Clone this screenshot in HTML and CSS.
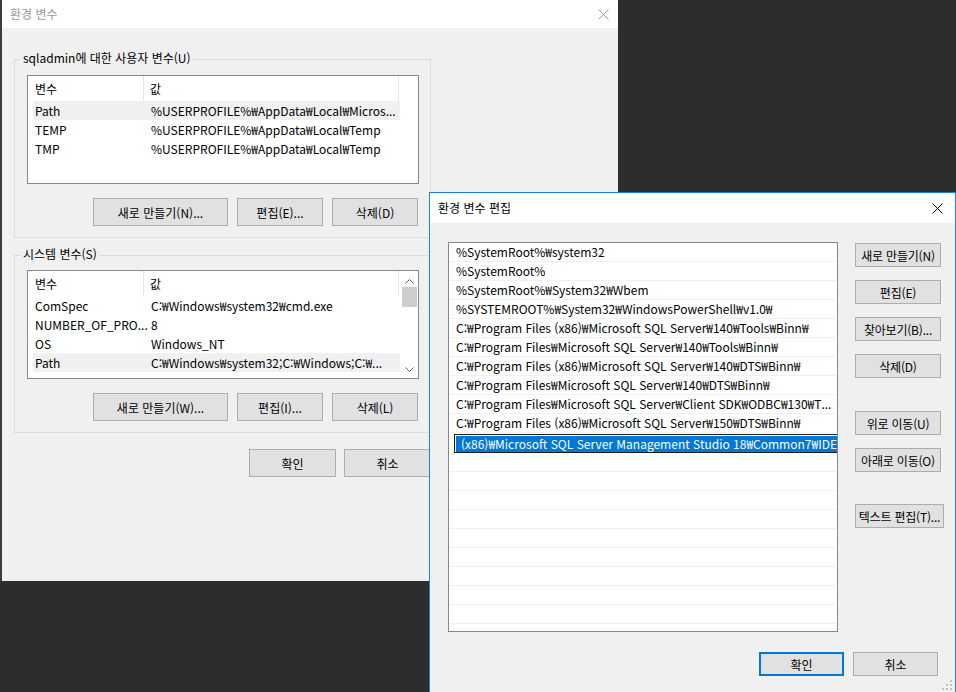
FILE: index.html
```html
<!DOCTYPE html>
<html lang="ko">
<head>
    <meta charset="UTF-8">
    <meta name="viewport" content="width=device-width, initial-scale=1.0">
    <title>환경 변수</title>
    <link rel="stylesheet" href="styles.css">
</head>
<body>
    <!-- back window: 환경 변수 -->
    <div class="window env-window">
        <div class="titlebar inactive">
            <span class="title">환경 변수</span>
            <svg class="close" width="11" height="11" viewBox="0 0 11 11">
                <path d="M0.5 0.5 L10.5 10.5 M10.5 0.5 L0.5 10.5" stroke="#9a9a9a" stroke-width="1" fill="none"/>
            </svg>
        </div>
        <div class="env-body">
            <div class="group user-group">
                <span class="group-label">sqladmin에 대한 사용자 변수(U)</span>
                <div class="listview">
                    <div class="lv-content">
                        <div class="lv-header">
                            <span class="hc1">변수</span>
                            <span class="hc2">값</span>
                        </div>
                        <div class="lv-row selected"><span class="c1">Path</span><span class="c2">%USERPROFILE%₩AppData₩Local₩Micros...</span></div>
                        <div class="lv-row"><span class="c1">TEMP</span><span class="c2">%USERPROFILE%₩AppData₩Local₩Temp</span></div>
                        <div class="lv-row"><span class="c1">TMP</span><span class="c2">%USERPROFILE%₩AppData₩Local₩Temp</span></div>
                    </div>
                </div>
                <div class="btn-row">
                    <button class="btn wide">새로 만들기(N)...</button>
                    <button class="btn">편집(E)...</button>
                    <button class="btn">삭제(D)</button>
                </div>
            </div>

            <div class="group system-group">
                <span class="group-label">시스템 변수(S)</span>
                <div class="listview">
                    <div class="lv-content">
                        <div class="lv-header">
                            <span class="hc1">변수</span>
                            <span class="hc2">값</span>
                        </div>
                        <div class="lv-row"><span class="c1">ComSpec</span><span class="c2">C:₩Windows₩system32₩cmd.exe</span></div>
                        <div class="lv-row"><span class="c1">NUMBER_OF_PRO...</span><span class="c2">8</span></div>
                        <div class="lv-row"><span class="c1">OS</span><span class="c2">Windows_NT</span></div>
                        <div class="lv-row selected"><span class="c1">Path</span><span class="c2">C:₩Windows₩system32;C:₩Windows;C:₩...</span></div>
                    </div>
                    <div class="scrollbar">
                        <svg class="arrow" width="9" height="5" viewBox="0 0 9 5"><path d="M0.5 4.5 L4.5 0.5 L8.5 4.5" stroke="#606060" fill="none"/></svg>
                        <div class="thumb"></div>
                        <div class="track"></div>
                        <svg class="arrow" width="9" height="5" viewBox="0 0 9 5"><path d="M0.5 0.5 L4.5 4.5 L8.5 0.5" stroke="#606060" fill="none"/></svg>
                    </div>
                </div>
                <div class="btn-row">
                    <button class="btn wide">새로 만들기(W)...</button>
                    <button class="btn">편집(I)...</button>
                    <button class="btn">삭제(L)</button>
                </div>
            </div>

            <div class="dialog-buttons">
                <button class="btn big">확인</button>
                <button class="btn big">취소</button>
            </div>
        </div>
    </div>

    <!-- front window: 환경 변수 편집 -->
    <div class="window edit-window">
        <div class="titlebar">
            <span class="title">환경 변수 편집</span>
            <svg class="close" width="11" height="11" viewBox="0 0 11 11">
                <path d="M0.5 0.5 L10.5 10.5 M10.5 0.5 L0.5 10.5" stroke="#000" stroke-width="1" fill="none"/>
            </svg>
        </div>
        <div class="edit-body">
            <div class="path-list">
                <div class="path-row">%SystemRoot%₩system32</div>
                <div class="path-row">%SystemRoot%</div>
                <div class="path-row">%SystemRoot%₩System32₩Wbem</div>
                <div class="path-row">%SYSTEMROOT%₩System32₩WindowsPowerShell₩v1.0₩</div>
                <div class="path-row">C:₩Program Files (x86)₩Microsoft SQL Server₩140₩Tools₩Binn₩</div>
                <div class="path-row">C:₩Program Files₩Microsoft SQL Server₩140₩Tools₩Binn₩</div>
                <div class="path-row">C:₩Program Files (x86)₩Microsoft SQL Server₩140₩DTS₩Binn₩</div>
                <div class="path-row">C:₩Program Files₩Microsoft SQL Server₩140₩DTS₩Binn₩</div>
                <div class="path-row">C:₩Program Files₩Microsoft SQL Server₩Client SDK₩ODBC₩130₩T...</div>
                <div class="path-row">C:₩Program Files (x86)₩Microsoft SQL Server₩150₩DTS₩Binn₩</div>
                <div class="path-row editing">
                    <div class="path-edit"><span class="sel">(x86)₩Microsoft SQL Server Management Studio 18₩Common7₩IDE</span></div>
                </div>
                <div class="path-row"></div>
                <div class="path-row"></div>
                <div class="path-row"></div>
                <div class="path-row"></div>
                <div class="path-row"></div>
                <div class="path-row"></div>
                <div class="path-row"></div>
                <div class="path-row"></div>
                <div class="path-row"></div>
                <div class="path-row"></div>
            </div>
            <div class="side-buttons">
                <button class="btn side">새로 만들기(N)</button>
                <button class="btn side">편집(E)</button>
                <button class="btn side">찾아보기(B)...</button>
                <button class="btn side">삭제(D)</button>
                <button class="btn side group-start">위로 이동(U)</button>
                <button class="btn side">아래로 이동(O)</button>
                <button class="btn side text-edit">텍스트 편집(T)...</button>
            </div>
        </div>
        <div class="edit-footer">
            <button class="btn foot default">확인</button>
            <button class="btn foot">취소</button>
        </div>
        <svg class="grip" width="12" height="12" viewBox="0 0 12 12">
            <rect x="9" y="1" width="2" height="2" fill="#c2c2c2"/>
            <rect x="5" y="5" width="2" height="2" fill="#c2c2c2"/>
            <rect x="9" y="5" width="2" height="2" fill="#c2c2c2"/>
            <rect x="1" y="9" width="2" height="2" fill="#c2c2c2"/>
            <rect x="5" y="9" width="2" height="2" fill="#c2c2c2"/>
            <rect x="9" y="9" width="2" height="2" fill="#c2c2c2"/>
        </svg>
    </div>
</body>
</html>
```

FILE: styles.css
```css
* {
    box-sizing: border-box;
}

body {
    margin: 0;
    width: 956px;
    height: 692px;
    overflow: hidden;
    position: relative;
    background: #2d2d30;
    font-family: "Noto Sans CJK KR", "Noto Sans", sans-serif;
    font-size: 12px;
    color: #000;
}

/* windows sit on the desktop */
.window {
    position: absolute;
    background: #f0f0f0;
}

.env-window {
    left: 0;
    top: 0;
    width: 618px;
    height: 581px;
    border-left: 2px solid #3c3c3c;
}

.edit-window {
    left: 429px;
    top: 192px;
    width: 527px;
    height: 500px;
    border: 1px solid #1883d7;
    border-bottom: none;
}

.titlebar {
    display: flex;
    align-items: center;
    justify-content: space-between;
    background: #fff;
    height: 30px;
    padding: 0 12px 0 8px;
}

.titlebar.inactive {
    height: 28px;
    padding: 0 9px 0 8px;
    color: #999;
}

.title {
    line-height: 16px;
}

/* ---- 환경 변수 ---- */
.env-body {
    padding-left: 12px;
    padding-top: 31px;
}

.group {
    width: 417px;
    border: 1px solid #dcdcdc;
    padding: 0 12px 11px 12px;
    display: flex;
    flex-direction: column;
}

.system-group {
    margin-top: 17px;
}

.group-label {
    align-self: flex-start;
    line-height: 16px;
    margin: -10px 0 0 -6px;
    padding: 0 2px;
    background: #f0f0f0;
}

.listview {
    margin-top: 9px;
    width: 392px;
    height: 109px;
    border: 1px solid #828790;
    background: #fff;
    display: flex;
    overflow: hidden;
}

.system-group .listview {
    margin-top: 8px;
}

.lv-content {
    flex: 1;
    overflow: hidden;
}

.lv-header {
    display: flex;
    height: 25px;
    line-height: 25px;
}

.hc1 {
    width: 116px;
    padding-left: 7px;
    border-right: 1px solid #e5e5e5;
}

.hc2 {
    width: 255px;
    padding-left: 6px;
    border-right: 1px solid #e5e5e5;
}

.lv-row {
    display: flex;
    margin-left: 5px;
    width: 367px;
    height: 19px;
    line-height: 19px;
    white-space: nowrap;
}

.lv-row.selected {
    background: #f0f0f0;
}

.c1 {
    width: 118px;
    padding-left: 2px;
    overflow: hidden;
}

.c2 {
    flex: 1;
    overflow: hidden;
}

.scrollbar {
    width: 17px;
    display: flex;
    flex-direction: column;
    align-items: center;
    padding: 8px 0 6px;
}

.scrollbar .thumb {
    margin-top: 3px;
    width: 15px;
    height: 20px;
    background: #cdcdcd;
}

.scrollbar .track {
    flex: 1;
}

.btn-row {
    display: flex;
    justify-content: flex-end;
    gap: 9px;
    margin-top: 14px;
}

.btn {
    font-family: inherit;
    font-size: 12px;
    color: #000;
    background: #e1e1e1;
    border: 1px solid #adadad;
    padding: 0;
    height: 28px;
    width: 86px;
    white-space: nowrap;
}

.btn.wide {
    width: 135px;
}

.dialog-buttons {
    width: 417px;
    display: flex;
    justify-content: flex-end;
    gap: 8px;
    margin-top: 16px;
}

.btn.big {
    width: 87px;
}

/* ---- 환경 변수 편집 ---- */
.edit-body {
    display: flex;
    padding: 19px 0 0 18px;
}

.path-list {
    width: 390px;
    height: 390px;
    border: 1px solid #828790;
    background: #fff;
    overflow: hidden;
}

.path-row {
    height: 19px;
    margin: 0 1px;
    padding-left: 6px;
    line-height: 18px;
    border-bottom: 1px solid #f0f0f0;
    white-space: nowrap;
    overflow: hidden;
}

.path-row.editing {
    padding: 0;
    overflow: visible;
    border-bottom: none;
}

.path-edit {
    margin: 1px 0 0 4px;
    width: 385px;
    height: 19px;
    border: 1px solid #1e1e1e;
    background: #fff;
    overflow: hidden;
    white-space: nowrap;
    padding: 1px 1px 0 1px;
}

.path-edit .sel {
    display: block;
    height: 16px;
    line-height: 16px;
    padding-left: 5px;
    background: #0078d7;
    color: #fff;
    overflow: hidden;
}

.side-buttons {
    margin-left: 17px;
    display: flex;
    flex-direction: column;
    align-items: flex-start;
    padding-top: 1px;
}

.btn.side {
    height: 24px;
    width: 86px;
    margin-bottom: 13px;
    letter-spacing: -0.2px;
}

.btn.side.group-start {
    margin-top: 20px;
}

.btn.side.text-edit {
    margin-top: 19px;
    width: 89px;
}

.edit-footer {
    display: flex;
    justify-content: flex-end;
    gap: 9px;
    padding-right: 17px;
    margin-top: 20px;
}

.btn.foot {
    width: 85px;
    height: 24px;
}

.btn.foot.default {
    border: 2px solid #0078d7;
}

.grip {
    position: absolute;
    right: 2px;
    bottom: 1px;
}
```
